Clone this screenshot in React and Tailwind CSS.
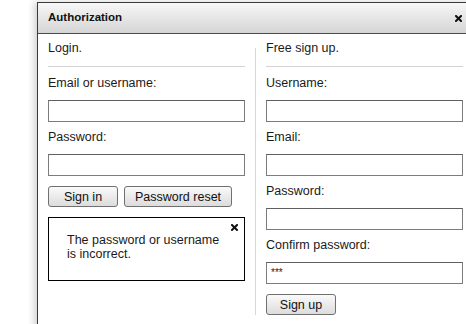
import React from "react";

function CloseIcon() {
  return (
    <svg width="7" height="7" viewBox="0 0 7 7" className="block">
      <path d="M1 1L6 6M6 1L1 6" stroke="#111" strokeWidth="2" strokeLinecap="square" />
    </svg>
  );
}

function Field({ label, value, first }) {
  return (
    <>
      <div className={`${first ? "mt-[8px]" : "mt-[7px]"} h-[15px] leading-[17px]`}>{label}</div>
      <div className="mt-[10px] h-[22px] border border-[#7c7c7c] border-t-[#5f5f5f] bg-white pl-[4px] text-[10px] leading-[20px] text-[#222]">
        {value}
      </div>
    </>
  );
}

function Button({ children, width }) {
  return (
    <button
      className={`${width} h-[21px] rounded-[3px] border border-[#707070] bg-gradient-to-b from-[#fafafa] to-[#dcdcdc] text-[12.5px] leading-[20px] text-[#111]`}
    >
      {children}
    </button>
  );
}

export default function App() {
  return (
    <div
      className="w-[466px] h-[324px] overflow-hidden bg-white pl-[37px] pt-[2px] text-[12.5px] text-[#1a1a1a]"
      style={{ fontFamily: '"Liberation Sans", Arial, sans-serif' }}
    >
      <div className="w-[438px] h-[340px] border border-[#3a3a3a] bg-white shadow-[-3px_0_7px_rgba(0,0,0,0.18)]">
        <div className="flex h-[31px] items-center justify-between border-b border-[#4a4a4a] bg-gradient-to-b from-[#f7f7f7] to-[#d5d5d5] pl-[10px] pr-[12px]">
          <span className="text-[11.5px] font-bold text-[#111]">Authorization</span>
          <CloseIcon />
        </div>
        <div className="flex px-[10px] pt-[6px]">
          <div className="flex w-[197px] flex-col">
            <div className="h-[15px] leading-[17px]">Login.</div>
            <div className="mt-[11px] h-px bg-[#d2d2d2]" />
            <Field label="Email or username:" first />
            <Field label="Password:" />
            <div className="mt-[10px] flex gap-[6px]">
              <Button width="w-[70px]">Sign in</Button>
              <Button width="w-[108px]">Password reset</Button>
            </div>
            <div className="relative mt-[10px] h-[64px] border border-black pl-[18px] pt-[15px] leading-[14px]">
              <div className="absolute right-[6px] top-[6px]">
                <CloseIcon />
              </div>
              The password or username
              <br />
              is incorrect.
            </div>
          </div>
          <div className="mx-[10px] mt-[8px] w-px bg-[#d8d8d8]" />
          <div className="flex w-[197px] flex-col">
            <div className="h-[15px] leading-[17px]">Free sign up.</div>
            <div className="mt-[11px] h-px bg-[#d2d2d2]" />
            <Field label="Username:" first />
            <Field label="Email:" />
            <Field label="Password:" />
            <Field label="Confirm password:" value="***" />
            <div className="mt-[10px]">
              <Button width="w-[70px]">Sign up</Button>
            </div>
          </div>
        </div>
      </div>
    </div>
  );
}
